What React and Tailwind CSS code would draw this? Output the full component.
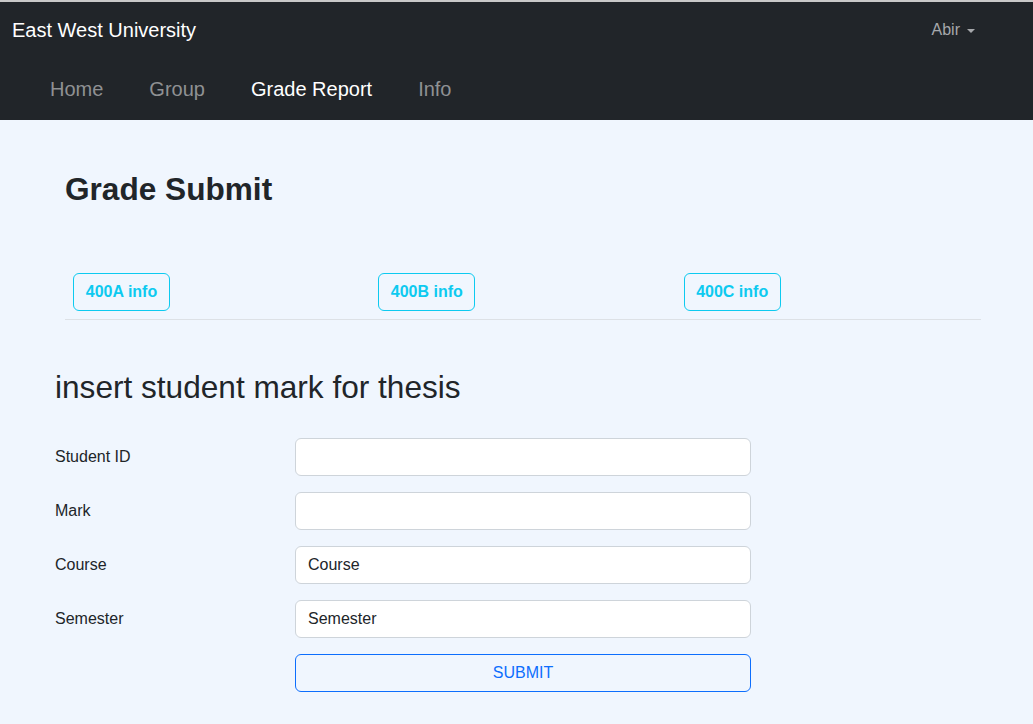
import React from "react";

const navLinks = ["Home", "Group", "Grade Report", "Info"];
const infoButtons = ["400A info", "400B info", "400C info"];
const fields = [
  { label: "Student ID", value: "" },
  { label: "Mark", value: "" },
  { label: "Course", value: "Course" },
  { label: "Semester", value: "Semester" },
];

const App = () => {
  return (
    <div className="min-h-screen bg-[#f0f6fe] font-['Liberation_Sans',Arial,sans-serif] text-[#212529]">
      <div className="h-[2px] bg-[#c8c8c8]" />
      <nav className="bg-[#212529] h-[118px] flex flex-col">
        <div className="flex items-center justify-between h-[56px] pl-3 pr-[58px]">
          <span className="text-white text-[20px]">East West University</span>
          <button className="flex items-center gap-[7px] text-[16px] text-[#a6a8ab]">
            Abir
            <span className="w-0 h-0 border-l-[4px] border-r-[4px] border-t-[4px] border-l-transparent border-r-transparent border-t-[#a6a8ab] mt-[1px]" />
          </button>
        </div>
        <ul className="flex items-center h-[62px] pl-[50px] gap-[46px]">
          {navLinks.map((link) => (
            <li
              key={link}
              className={`text-[20px] ${
                link === "Grade Report" ? "text-white" : "text-[#8f9193]"
              }`}
            >
              {link}
            </li>
          ))}
        </ul>
      </nav>

      <main className="pl-[55px]">
        <div className="pl-[10px] pr-[52px]">
          <h2 className="text-[31.6px] font-bold pt-[50px] leading-[38px]">Grade Submit</h2>
          <div className="grid grid-cols-3 mt-[65px] border-b border-[#dde1e6] pb-2">
            {infoButtons.map((b) => (
              <div key={b} className="px-2">
                <button className="h-[38px] w-[97px] border border-[#0dcaf0] rounded-[6px] text-[#0dcaf0] font-bold text-[16px]">
                  {b}
                </button>
              </div>
            ))}
          </div>
        </div>

        <h3 className="text-[31.6px] mt-[48px] leading-[38px]">insert student mark for thesis</h3>

        <form className="mt-[32px] flex flex-col gap-4">
          {fields.map((f) => (
            <div key={f.label} className="flex items-center">
              <label className="w-[240px] text-[16px]">{f.label}</label>
              <input
                defaultValue={f.value}
                className="w-[456px] h-[38px] bg-white border border-[#ced4da] rounded-[6px] px-3 text-[16px] text-[#212529] outline-none"
              />
            </div>
          ))}
          <div className="flex">
            <div className="w-[240px]" />
            <button
              type="button"
              className="w-[456px] h-[38px] border border-[#0d6efd] rounded-[6px] text-[#0d6efd] text-[16px]"
            >
              SUBMIT
            </button>
          </div>
        </form>
      </main>
    </div>
  );
};

export default App;
